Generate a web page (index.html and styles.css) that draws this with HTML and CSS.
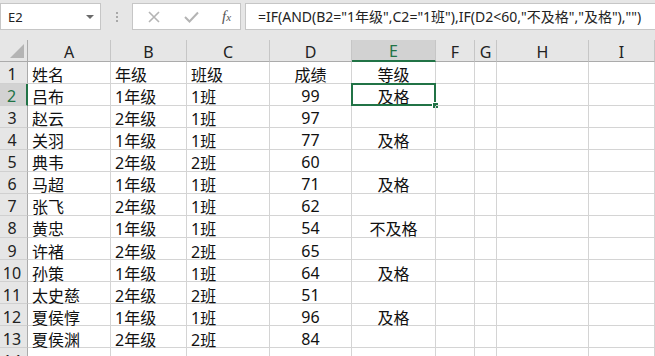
FILE: index.html
```html
<!DOCTYPE html>
<html lang="zh-CN">
<head>
    <meta charset="UTF-8">
    <title>成绩表</title>
    <link rel="stylesheet" href="styles.css">
</head>
<body>
    <div class="toolbar">
        <div class="name-box">
            <span>E2</span>
            <span class="arrow"></span>
        </div>
        <div class="dots">
            <span></span><span></span><span></span>
        </div>
        <div class="btn-box">
            <svg class="icon" width="12" height="12" viewBox="0 0 12 12">
                <path d="M1 1 L11 11 M11 1 L1 11" stroke="#b4b4b4" stroke-width="1.6" fill="none"/>
            </svg>
            <svg class="icon" width="15" height="12" viewBox="0 0 15 12">
                <path d="M1 6 L5.5 10.5 L14 1.5" stroke="#b4b4b4" stroke-width="2" fill="none"/>
            </svg>
            <span class="fx">f<sub>x</sub></span>
        </div>
        <div class="formula">=IF(AND(B2="1年级",C2="1班"),IF(D2&lt;60,"不及格","及格"),"")</div>
    </div>

    <div class="sheet" id="sheet"></div>

    <script>
        // 表格数据
        let cols = ['A', 'B', 'C', 'D', 'E', 'F', 'G', 'H', 'I'];
        let rows = [
            ['姓名', '年级', '班级', '成绩', '等级'],
            ['吕布', '1年级', '1班', '99', '及格'],
            ['赵云', '2年级', '1班', '97', ''],
            ['关羽', '1年级', '1班', '77', '及格'],
            ['典韦', '2年级', '2班', '60', ''],
            ['马超', '1年级', '1班', '71', '及格'],
            ['张飞', '2年级', '1班', '62', ''],
            ['黄忠', '1年级', '1班', '54', '不及格'],
            ['许褚', '2年级', '2班', '65', ''],
            ['孙策', '1年级', '1班', '64', '及格'],
            ['太史慈', '2年级', '2班', '51', ''],
            ['夏侯惇', '1年级', '1班', '96', '及格'],
            ['夏侯渊', '2年级', '2班', '84', ''],
            ['', '', '', '', '']
        ];

        let sheet = document.getElementById('sheet');
        let html = '<div class="corner"><span class="tri"></span></div>';
        cols.forEach(function (c) {
            html += '<div class="col-head' + (c === 'E' ? ' active' : '') + '">' + c + '</div>';
        });
        rows.forEach(function (r, i) {
            let n = i + 1;
            html += '<div class="row-head' + (n === 2 ? ' active' : '') + '">' + n + '</div>';
            cols.forEach(function (c, j) {
                let v = r[j] || '';
                let cls = 'cell';
                if (c === 'D' || c === 'E') cls += ' center';
                if (c === 'E' && n === 2) cls += ' selected';
                html += '<div class="' + cls + '">' + v + (cls.indexOf('selected') > -1 ? '<span class="handle"></span>' : '') + '</div>';
            });
        });
        sheet.innerHTML = html;
    </script>
</body>
</html>
```

FILE: styles.css
```css
body {
    margin: 0;
    width: 655px;
    height: 356px;
    overflow: hidden;
    background-color: #e6e6e6;
    font-family: "Noto Sans", "Noto Sans CJK SC", sans-serif;
}
.toolbar {
    display: flex;
    align-items: flex-start;
    height: 40px;
    padding-top: 3px;
    box-sizing: border-box;
}
.name-box {
    width: 101px;
    height: 27px;
    box-sizing: border-box;
    background-color: #fff;
    border: 1px solid #c6c6c6;
    display: flex;
    align-items: center;
    justify-content: space-between;
    padding: 0 6px 0 7px;
    font-size: 13px;
    color: #222;
}
.arrow {
    width: 0;
    height: 0;
    border-left: 4px solid transparent;
    border-right: 4px solid transparent;
    border-top: 4px solid #6a6a6a;
}
.dots {
    width: 31px;
    height: 27px;
    display: flex;
    flex-direction: column;
    align-items: center;
    justify-content: center;
    gap: 2px;
}
.dots span {
    width: 2px;
    height: 2px;
    background-color: #a8a8a8;
}
.btn-box {
    width: 109px;
    height: 27px;
    box-sizing: border-box;
    background-color: #fff;
    border: 1px solid #c6c6c6;
    display: flex;
    align-items: center;
    padding-left: 15px;
    gap: 24px;
}
.fx {
    font-family: "Liberation Serif", serif;
    font-style: italic;
    font-size: 15px;
    color: #555;
    margin-left: -1px;
}
.fx sub {
    font-size: 11px;
    vertical-align: 0;
}
.formula {
    flex: 1;
    margin-left: 4px;
    height: 27px;
    box-sizing: border-box;
    background-color: #fff;
    border: 1px solid #c6c6c6;
    border-right: none;
    padding-left: 12px;
    font-size: 14px;
    line-height: 25px;
    color: #222;
    white-space: nowrap;
    overflow: hidden;
}
.sheet {
    display: grid;
    grid-template-columns: 28px 83px 76px 83px 82px 84px 39px 22px 92px 1fr;
    grid-template-rows: 21.5px;
    grid-auto-rows: 22.07px;
    background-color: #fff;
}
.corner {
    position: relative;
    background-color: #e6e6e6;
    border-right: 1px solid #ababab;
    border-bottom: 1px solid #ababab;
}
.tri {
    position: absolute;
    right: 3px;
    bottom: 3px;
    width: 0;
    height: 0;
    border-left: 14px solid transparent;
    border-bottom: 14px solid #b4b4b4;
}
.col-head {
    background-color: #e6e6e6;
    border-right: 1px solid #c6c6c6;
    border-bottom: 1px solid #ababab;
    display: flex;
    align-items: center;
    justify-content: center;
    padding-top: 3px;
    font-size: 16px;
    color: #222;
}
.col-head.active {
    background-color: #d2d2d2;
    border-bottom: 2px solid #217346;
    color: #217346;
}
.row-head {
    background-color: #e6e6e6;
    border-right: 1px solid #ababab;
    border-bottom: 1px solid #d0d0d0;
    display: flex;
    align-items: center;
    justify-content: center;
    padding: 4px 3px 0 0;
    font-size: 16px;
    color: #222;
}
.row-head.active {
    background-color: #d2d2d2;
    border-right: 2px solid #217346;
    color: #217346;
}
.cell {
    position: relative;
    border-right: 1px solid #d4d4d4;
    border-bottom: 1px solid #d4d4d4;
    display: flex;
    align-items: center;
    padding: 4px 4px 0;
    font-size: 16px;
    color: #111;
    white-space: nowrap;
}
.center {
    justify-content: center;
}
.selected::before {
    content: "";
    position: absolute;
    left: -1px;
    top: -1px;
    right: -1px;
    bottom: -1px;
    border: 2px solid #217346;
}
.handle {
    position: absolute;
    right: -4px;
    bottom: -4px;
    width: 5px;
    height: 5px;
    background-color: #217346;
    border: 1px solid #fff;
}
```
